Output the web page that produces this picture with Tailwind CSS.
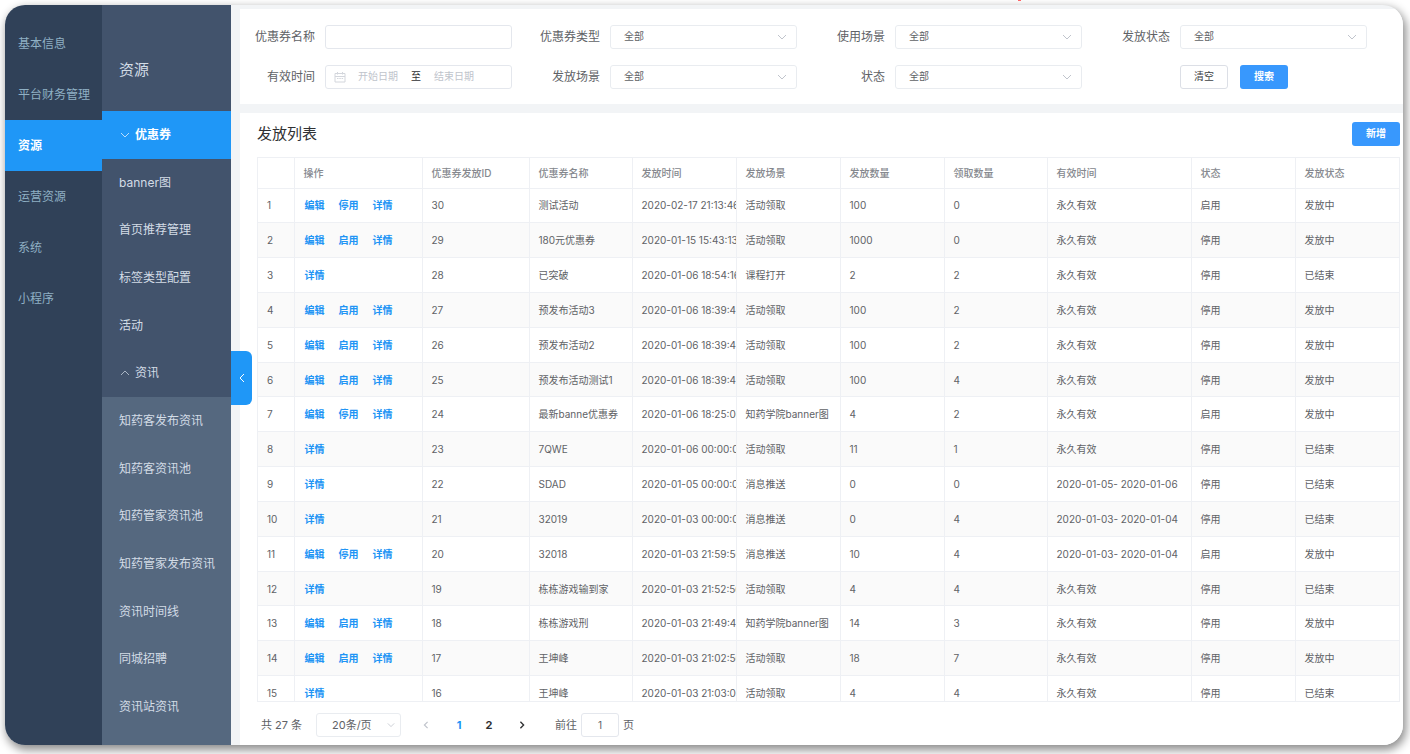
<!DOCTYPE html>
<html lang="zh-CN">
<head>
  <meta charset="UTF-8" />
  <meta name="viewport" content="width=device-width, initial-scale=1.0" />
  <title>资源 - 优惠券发放列表</title>
  <script src="https://cdn.jsdelivr.net/npm/@tailwindcss/browser@4"></script>
</head>
<body class="relative flex h-screen bg-white pt-[5px] pr-[7px] pb-[9px] pl-[5px] font-['Inter','Noto_Sans_CJK_SC',sans-serif] text-xs text-[#606266]">
  <span class="absolute top-0 left-[1018px] h-px w-[3px] bg-red-400"></span>

  <div class="flex min-w-0 flex-1 overflow-hidden rounded-[20px] bg-[#f2f4f6] shadow-[2px_4px_10px_1px_rgba(0,0,0,0.45)]">

    <!-- 一级菜单 -->
    <nav class="w-[97px] shrink-0 bg-[#304158] pt-[13px] text-[#8fb0c4]">
      <a href="#" class="flex h-[51px] items-center pl-[13px]">基本信息</a>
      <a href="#" class="flex h-[51px] items-center pl-[13px]">平台财务管理</a>
      <a href="#" class="flex h-[51px] items-center bg-[#1f97f7] pl-[13px] font-bold text-white">资源</a>
      <a href="#" class="flex h-[51px] items-center pl-[13px]">运营资源</a>
      <a href="#" class="flex h-[51px] items-center pl-[13px]">系统</a>
      <a href="#" class="flex h-[51px] items-center pl-[13px]">小程序</a>
    </nav>

    <!-- 二级菜单 -->
    <aside class="relative flex w-[129px] shrink-0 flex-col bg-[#55687f] pb-[14px] text-[#d3dce6]">
      <h2 class="flex h-[106px] items-center bg-[#42536c] pt-6 pl-[17px] text-[15px]">资源</h2>
      <nav class="grid flex-1 auto-rows-fr">
        <a href="#" class="flex items-center gap-[5px] bg-[#1f97f7] pl-[18px] font-bold text-white">
          <svg class="h-[10px] w-[10px]" viewBox="0 0 10 10" fill="none" stroke="#b9defd"><path d="M1 3l4 4 4-4" /></svg>优惠券
        </a>
        <a href="#" class="flex items-center bg-[#42536c] pl-[17px]">banner图</a>
        <a href="#" class="flex items-center bg-[#42536c] pl-[17px]">首页推荐管理</a>
        <a href="#" class="flex items-center bg-[#42536c] pl-[17px]">标签类型配置</a>
        <a href="#" class="flex items-center bg-[#42536c] pl-[17px]">活动</a>
        <a href="#" class="flex items-center gap-[5px] bg-[#42536c] pl-[18px]">
          <svg class="h-[10px] w-[10px]" viewBox="0 0 10 10" fill="none" stroke="#a9b5c4"><path d="M1 7l4-4 4 4" /></svg>资讯
        </a>
        <a href="#" class="flex items-center pl-[17px]">知药客发布资讯</a>
        <a href="#" class="flex items-center pl-[17px]">知药客资讯池</a>
        <a href="#" class="flex items-center pl-[17px]">知药管家资讯池</a>
        <a href="#" class="flex items-center pl-[17px]">知药管家发布资讯</a>
        <a href="#" class="flex items-center pl-[17px]">资讯时间线</a>
        <a href="#" class="flex items-center pl-[17px]">同城招聘</a>
        <a href="#" class="flex items-center pl-[17px]">资讯站资讯</a>
      </nav>
      <button type="button" aria-label="收起菜单" class="absolute top-[346px] left-full z-10 flex h-[54px] w-[21px] items-center justify-center rounded-r-md bg-[#1f97f7]">
        <svg class="h-[10px] w-[10px]" viewBox="0 0 10 10" fill="none" stroke="white"><path d="M7 1L3 5l4 4" /></svg>
      </button>
    </aside>

    <main class="flex min-w-0 flex-1 flex-col gap-[9px] pt-1 pl-[9px]">

      <!-- 筛选条件 -->
      <form id="filterForm" class="grid grid-cols-4 gap-y-4 bg-white pt-4 pr-[23px] pb-[15px]">
        <div class="flex h-6 items-center gap-[10px] pr-[13px]">
          <label for="couponName" class="w-[75px] text-right">优惠券名称</label>
          <input type="text" id="couponName" class="h-6 min-w-0 flex-1 rounded-[3px] border border-[#e4e7ed] px-3 text-[10px]" />
        </div>
        <div class="flex h-6 items-center gap-[10px] pr-[13px]">
          <label for="couponType" class="w-[75px] text-right">优惠券类型</label>
          <div class="relative min-w-0 flex-1">
            <select id="couponType" class="block h-6 w-full appearance-none rounded-[3px] border border-[#e9ecf0] bg-white px-[13px] text-[10px]"><option>全部</option></select>
            <svg class="pointer-events-none absolute top-[7px] right-[10px] h-[10px] w-[10px]" viewBox="0 0 10 10" fill="none" stroke="#c0c4cc"><path d="M1 3l4 4 4-4" /></svg>
          </div>
        </div>
        <div class="flex h-6 items-center gap-[10px] pr-[13px]">
          <label for="useScene" class="w-[75px] text-right">使用场景</label>
          <div class="relative min-w-0 flex-1">
            <select id="useScene" class="block h-6 w-full appearance-none rounded-[3px] border border-[#e9ecf0] bg-white px-[13px] text-[10px]"><option>全部</option></select>
            <svg class="pointer-events-none absolute top-[7px] right-[10px] h-[10px] w-[10px]" viewBox="0 0 10 10" fill="none" stroke="#c0c4cc"><path d="M1 3l4 4 4-4" /></svg>
          </div>
        </div>
        <div class="flex h-6 items-center gap-[10px] pr-[13px]">
          <label for="sendStatus" class="w-[75px] text-right">发放状态</label>
          <div class="relative min-w-0 flex-1">
            <select id="sendStatus" class="block h-6 w-full appearance-none rounded-[3px] border border-[#e9ecf0] bg-white px-[13px] text-[10px]"><option>全部</option></select>
            <svg class="pointer-events-none absolute top-[7px] right-[10px] h-[10px] w-[10px]" viewBox="0 0 10 10" fill="none" stroke="#c0c4cc"><path d="M1 3l4 4 4-4" /></svg>
          </div>
        </div>

        <div class="flex h-6 items-center gap-[10px] pr-[13px]">
          <label for="startDate" class="w-[75px] text-right">有效时间</label>
          <div class="flex h-6 min-w-0 flex-1 items-center rounded-[3px] border border-[#e4e7ed] pl-2 text-[10px]">
            <svg class="mr-1 h-3 w-3 shrink-0" viewBox="0 0 12 12" fill="none" stroke="#d3d6dc"><path d="M1 2.5h10v8.500H1zM1 5.500h10M3.500 1v2.500M8.500 1v2.500M3 7.500h1.500M5.300 7.500h1.500M7.600 7.500h1.500" /></svg>
            <input type="text" id="startDate" placeholder="开始日期" class="w-14 text-center placeholder:text-[#c0c4cc]" />
            <span class="w-5 text-center text-[#303133]">至</span>
            <input type="text" id="endDate" aria-label="结束日期" placeholder="结束日期" class="w-14 text-center placeholder:text-[#c0c4cc]" />
          </div>
        </div>
        <div class="flex h-6 items-center gap-[10px] pr-[13px]">
          <label for="sendScene" class="w-[75px] text-right">发放场景</label>
          <div class="relative min-w-0 flex-1">
            <select id="sendScene" class="block h-6 w-full appearance-none rounded-[3px] border border-[#e9ecf0] bg-white px-[13px] text-[10px]"><option>全部</option></select>
            <svg class="pointer-events-none absolute top-[7px] right-[10px] h-[10px] w-[10px]" viewBox="0 0 10 10" fill="none" stroke="#c0c4cc"><path d="M1 3l4 4 4-4" /></svg>
          </div>
        </div>
        <div class="flex h-6 items-center gap-[10px] pr-[13px]">
          <label for="status" class="w-[75px] text-right">状态</label>
          <div class="relative min-w-0 flex-1">
            <select id="status" class="block h-6 w-full appearance-none rounded-[3px] border border-[#e9ecf0] bg-white px-[13px] text-[10px]"><option>全部</option></select>
            <svg class="pointer-events-none absolute top-[7px] right-[10px] h-[10px] w-[10px]" viewBox="0 0 10 10" fill="none" stroke="#c0c4cc"><path d="M1 3l4 4 4-4" /></svg>
          </div>
        </div>
        <div class="flex h-6 gap-3 pl-[85px] text-[10px]">
          <button type="reset" class="h-6 w-12 rounded-[3px] border border-[#dcdfe6] text-[#404246]">清空</button>
          <button type="submit" class="h-6 w-12 rounded-[3px] bg-[#3898fd] font-bold text-white">搜索</button>
        </div>
      </form>

      <!-- 发放列表 -->
      <section class="flex min-h-0 flex-1 flex-col bg-white pt-[9px] pr-[3px] pb-2 pl-[17px]">
        <div class="mb-[11px] flex h-6 items-center justify-between">
          <h1 class="text-[15px] text-[#303133]">发放列表</h1>
          <button type="button" class="h-6 w-12 rounded-[3px] bg-[#3898fd] text-[10px] font-bold text-white">新增</button>
        </div>

        <div class="min-h-0 flex-1 overflow-hidden border border-[#eef0f4]">
          <table class="h-[553px] w-full table-fixed border-collapse text-left text-[10px] leading-4">
            <colgroup>
              <col class="w-[36px]" />
              <col class="w-[128px]" />
              <col class="w-[107px]" />
              <col class="w-[103px]" />
              <col class="w-[104px]" />
              <col class="w-[104px]" />
              <col class="w-[104px]" />
              <col class="w-[103px]" />
              <col class="w-[144px]" />
              <col class="w-[104px]" />
              <col />
            </colgroup>
            <thead>
              <tr id="tableHead" class="h-[30px]"></tr>
            </thead>
            <tbody id="tableBody"></tbody>
          </table>
        </div>

        <!-- 分页 -->
        <div class="mt-[11px] flex h-6 items-center pl-1">
          <span class="w-[55px] text-[11px]">共 27 条</span>
          <div class="relative w-[85px]">
            <select aria-label="每页条数" class="block h-6 w-full appearance-none rounded-[3px] border border-[#e9ecf0] bg-white pl-[15px] text-[11px]"><option>20条/页</option></select>
            <svg class="pointer-events-none absolute top-2 right-[6px] h-2 w-2" viewBox="0 0 10 10" fill="none" stroke="#c0c4cc"><path d="M1 3l4 4 4-4" /></svg>
          </div>
          <div class="ml-[10px] flex items-center text-[11px] font-bold text-[#303133]">
            <button type="button" aria-label="上一页" class="flex h-6 w-[30px] items-center justify-center"><svg class="h-2 w-2" viewBox="0 0 10 10" fill="none" stroke="#c0c4cc" stroke-width="1.500"><path d="M7 1L3 5l4 4" /></svg></button>
            <button type="button" class="ml-[3px] h-6 w-[30px] text-[#2094f5]">1</button>
            <button type="button" class="h-6 w-[30px]">2</button>
            <button type="button" aria-label="下一页" class="ml-[3px] flex h-6 w-[30px] items-center justify-center"><svg class="h-2 w-2" viewBox="0 0 10 10" fill="none" stroke="#303133" stroke-width="1.700"><path d="M3 1l4 4-4 4" /></svg></button>
          </div>
          <label class="ml-[18px] flex items-center gap-1 text-[11px]">前往
            <input type="text" value="1" class="h-6 w-[38px] rounded-[3px] border border-[#e4e7ed] text-center text-[10px]" />
            页
          </label>
        </div>
      </section>
    </main>
  </div>

  <script>
    const columns = ['', '操作', '优惠券发放ID', '优惠券名称', '发放时间', '发放场景', '发放数量', '领取数量', '有效时间', '状态', '发放状态'];

    // 操作, ID, 名称, 发放时间, 场景, 发放数量, 领取数量, 有效时间, 状态, 发放状态
    const rows = [
      ['编辑 停用 详情', 30, '测试活动', '2020-02-17 21:13:46', '活动领取', 100, 0, '永久有效', '启用', '发放中'],
      ['编辑 启用 详情', 29, '180元优惠券', '2020-01-15 15:43:13', '活动领取', 1000, 0, '永久有效', '停用', '发放中'],
      ['详情', 28, '已突破', '2020-01-06 18:54:16', '课程打开', 2, 2, '永久有效', '停用', '已结束'],
      ['编辑 启用 详情', 27, '预发布活动3', '2020-01-06 18:39:46', '活动领取', 100, 2, '永久有效', '停用', '发放中'],
      ['编辑 启用 详情', 26, '预发布活动2', '2020-01-06 18:39:46', '活动领取', 100, 2, '永久有效', '停用', '发放中'],
      ['编辑 启用 详情', 25, '预发布活动测试1', '2020-01-06 18:39:46', '活动领取', 100, 4, '永久有效', '停用', '发放中'],
      ['编辑 停用 详情', 24, '最新banne优惠券', '2020-01-06 18:25:06', '知药学院banner图', 4, 2, '永久有效', '启用', '发放中'],
      ['详情', 23, '7QWE', '2020-01-06 00:00:00', '活动领取', 11, 1, '永久有效', '停用', '已结束'],
      ['详情', 22, 'SDAD', '2020-01-05 00:00:00', '消息推送', 0, 0, '2020-01-05- 2020-01-06', '停用', '已结束'],
      ['详情', 21, '32019', '2020-01-03 00:00:00', '消息推送', 0, 4, '2020-01-03- 2020-01-04', '停用', '已结束'],
      ['编辑 停用 详情', 20, '32018', '2020-01-03 21:59:56', '消息推送', 10, 4, '2020-01-03- 2020-01-04', '启用', '发放中'],
      ['详情', 19, '栋栋游戏输到家', '2020-01-03 21:52:56', '活动领取', 4, 4, '永久有效', '停用', '已结束'],
      ['编辑 启用 详情', 18, '栋栋游戏刑', '2020-01-03 21:49:46', '知药学院banner图', 14, 3, '永久有效', '停用', '发放中'],
      ['编辑 启用 详情', 17, '王坤峰', '2020-01-03 21:02:56', '活动领取', 18, 7, '永久有效', '停用', '发放中'],
      ['详情', 16, '王坤峰', '2020-01-03 21:03:06', '活动领取', 4, 4, '永久有效', '停用', '已结束'],
    ];

    document.getElementById('tableHead').innerHTML = columns
      .map((c) => `<th class="border-r border-b border-[#eef0f4] pl-[9px] font-medium text-[#85888e] last:border-r-0">${c}</th>`)
      .join('');

    document.getElementById('tableBody').innerHTML = rows.map(([ops, ...cells], i) => {
      const links = ops.split(' ').map((op) => `<a href="#" class="mr-[14px] font-bold text-[#2094f5]">${op}</a>`).join('');
      const tds = cells.map((c) => `<td class="overflow-hidden border-r border-b border-[#eef0f4] pl-[9px] whitespace-nowrap last:border-r-0">${c}</td>`).join('');
      return `
        <tr class="h-[34px] even:bg-[#fafafa]">
          <td class="border-r border-b border-[#eef0f4] pl-[9px]">${i + 1}</td>
          <td class="border-r border-b border-[#eef0f4] pl-[10px] whitespace-nowrap">${links}</td>
          ${tds}
        </tr>`;
    }).join('');

    document.getElementById('filterForm').addEventListener('submit', (e) => e.preventDefault());
  </script>
</body>
</html>
